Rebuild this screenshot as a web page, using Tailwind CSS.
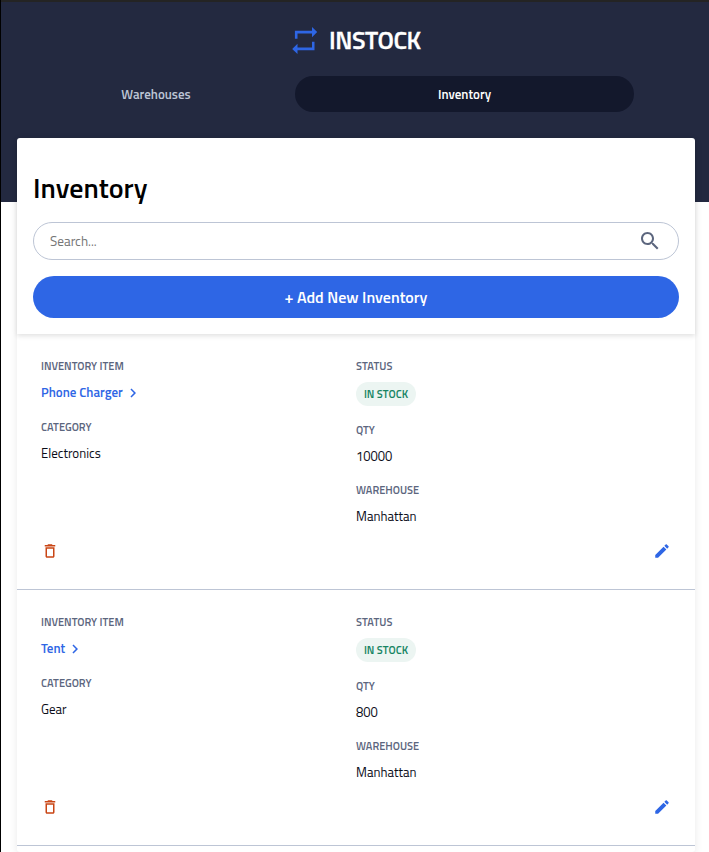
<!DOCTYPE html>
<html lang="en">
<head>
<meta charset="utf-8">
<title>InStock</title>
<script src="https://cdn.jsdelivr.net/npm/@tailwindcss/browser@4"></script>
</head>
<body class="h-[852px] overflow-hidden border-l border-black bg-white font-['Titillium_Web',Roboto,sans-serif] text-[13px] leading-5 text-[#0b0d18]">
<header class="h-[202px] border-t-2 border-[#242424] bg-[#232940]">
  <div class="flex h-[74px] items-center pt-0.5 pl-[291px]">
    <svg class="h-[27px] w-[26px] shrink-0" viewBox="0 0 26 27" fill="#2e66e5"><path d="M2.900 11.800V3.800H20V0L25.200 5.100L20 10.300V6.400H5.500V11.800ZM22.500 14.800V23.200H5.500V27L0.200 21.900L5.500 16.700V20.500H20V14.800Z"/></svg>
    <span class="ml-[11px] text-[25px] leading-8 font-semibold tracking-[-0.45px] text-white [-webkit-text-stroke:0.3px_white]">INSTOCK</span>
  </div>
  <nav class="flex h-9 pr-[75px] pl-4 text-center leading-9 font-semibold">
    <a class="w-[278px] text-[#bdc5d5]">Warehouses</a>
    <a class="flex-1 rounded-full bg-[#13182c] text-white">Inventory</a>
  </nav>
</header>
<main class="relative -mt-16 mr-[14px] ml-4 rounded-[3px] bg-white shadow-[0_2px_8px_rgba(0,0,0,0.09)]">
  <section class="h-[196px] rounded-t-[3px] px-4 pt-8 shadow-[0_2px_5px_rgba(0,0,0,0.12)]">
    <h1 class="h-[52px] text-[28px] leading-9 font-semibold text-black">Inventory</h1>
    <div class="flex h-[38px] items-center justify-between rounded-full border border-[#bdc5d5] pr-4 pl-4">
      <span class="text-[13.333px] text-[#757575]">Search...</span>
      <svg class="size-6" viewBox="0 0 24 24" fill="#5c667e"><path d="M15.500 14h-.79l-.28-.27C15.410 12.590 16 11.110 16 9.500 16 5.910 13.090 3 9.500 3S3 5.910 3 9.500 5.910 16 9.500 16c1.610 0 3.090-.59 4.230-1.570l.27.28v.79l5 4.990L20.490 19l-4.990-5zm-6 0C7.010 14 5 11.990 5 9.500S7.010 5 9.500 5 14 7.010 14 9.500 11.990 14 9.500 14z"/></svg>
    </div>
    <button class="mt-4 block h-[42px] w-full rounded-full bg-[#2e66e5] text-[16px] font-semibold text-white">+ Add New Inventory</button>
  </section>
  <article class="h-64 border-b border-[#bdc5d5] px-6 pt-6">
    <div class="flex h-[184px]">
      <dl class="w-[315px]">
        <dt class="text-[11px] leading-4 font-semibold text-[#5c667e]">INVENTORY ITEM</dt>
        <dd class="mt-2 flex h-[21px] items-start font-semibold text-[#2e66e5]"><span>Phone Charger</span><svg class="mt-0.5 ml-px size-[18px]" viewBox="0 0 24 24" fill="currentColor"><path d="M10 6L8.590 7.410 13.170 12l-4.580 4.590L10 18l6-6z"/></svg></dd>
        <dt class="mt-4 text-[11px] leading-4 font-semibold text-[#5c667e]">CATEGORY</dt>
        <dd class="mt-2">Electronics</dd>
      </dl>
      <dl>
        <dt class="text-[11px] leading-4 font-semibold text-[#5c667e]">STATUS</dt>
        <dd class="mt-2 h-6 w-[60px] rounded-full bg-[#ecf5f2] text-center text-[11px] leading-6 font-semibold text-[#158463]">IN STOCK</dd>
        <dt class="mt-4 text-[11px] leading-4 font-semibold text-[#5c667e]">QTY</dt>
        <dd class="mt-2">10000</dd>
        <dt class="mt-4 text-[11px] leading-4 font-semibold text-[#5c667e]">WAREHOUSE</dt>
        <dd class="mt-2">Manhattan</dd>
      </dl>
    </div>
    <div class="flex justify-between">
      <svg class="size-[18px]" viewBox="0 0 24 24" fill="#c94515"><path d="M6 19c0 1.100.9 2 2 2h8c1.100 0 2-.9 2-2V7H6v12zM8 9h8v10H8V9zm7.500-5l-1-1h-5l-1 1H5v2h14V4z"/></svg>
      <svg class="size-[18px]" viewBox="0 0 24 24" fill="#2e66e5"><path d="M3 17.250V21h3.750L17.810 9.940l-3.750-3.750L3 17.250zM20.710 7.040c.39-.39.39-1.020 0-1.410l-2.340-2.340c-.39-.39-1.020-.39-1.410 0l-1.830 1.830 3.750 3.750 1.830-1.830z"/></svg>
    </div>
  </article>
  <article class="h-64 border-b border-[#bdc5d5] px-6 pt-6">
    <div class="flex h-[184px]">
      <dl class="w-[315px]">
        <dt class="text-[11px] leading-4 font-semibold text-[#5c667e]">INVENTORY ITEM</dt>
        <dd class="mt-2 flex h-[21px] items-start font-semibold text-[#2e66e5]"><span>Tent</span><svg class="mt-0.5 ml-px size-[18px]" viewBox="0 0 24 24" fill="currentColor"><path d="M10 6L8.590 7.410 13.170 12l-4.580 4.590L10 18l6-6z"/></svg></dd>
        <dt class="mt-4 text-[11px] leading-4 font-semibold text-[#5c667e]">CATEGORY</dt>
        <dd class="mt-2">Gear</dd>
      </dl>
      <dl>
        <dt class="text-[11px] leading-4 font-semibold text-[#5c667e]">STATUS</dt>
        <dd class="mt-2 h-6 w-[60px] rounded-full bg-[#ecf5f2] text-center text-[11px] leading-6 font-semibold text-[#158463]">IN STOCK</dd>
        <dt class="mt-4 text-[11px] leading-4 font-semibold text-[#5c667e]">QTY</dt>
        <dd class="mt-2">800</dd>
        <dt class="mt-4 text-[11px] leading-4 font-semibold text-[#5c667e]">WAREHOUSE</dt>
        <dd class="mt-2">Manhattan</dd>
      </dl>
    </div>
    <div class="flex justify-between">
      <svg class="size-[18px]" viewBox="0 0 24 24" fill="#c94515"><path d="M6 19c0 1.100.9 2 2 2h8c1.100 0 2-.9 2-2V7H6v12zM8 9h8v10H8V9zm7.500-5l-1-1h-5l-1 1H5v2h14V4z"/></svg>
      <svg class="size-[18px]" viewBox="0 0 24 24" fill="#2e66e5"><path d="M3 17.250V21h3.750L17.810 9.940l-3.750-3.750L3 17.250zM20.710 7.040c.39-.39.39-1.020 0-1.410l-2.340-2.340c-.39-.39-1.020-.39-1.410 0l-1.830 1.830 3.750 3.750 1.830-1.830z"/></svg>
    </div>
  </article>
  <div class="h-[6px]"></div>
</main>
</body>
</html>
